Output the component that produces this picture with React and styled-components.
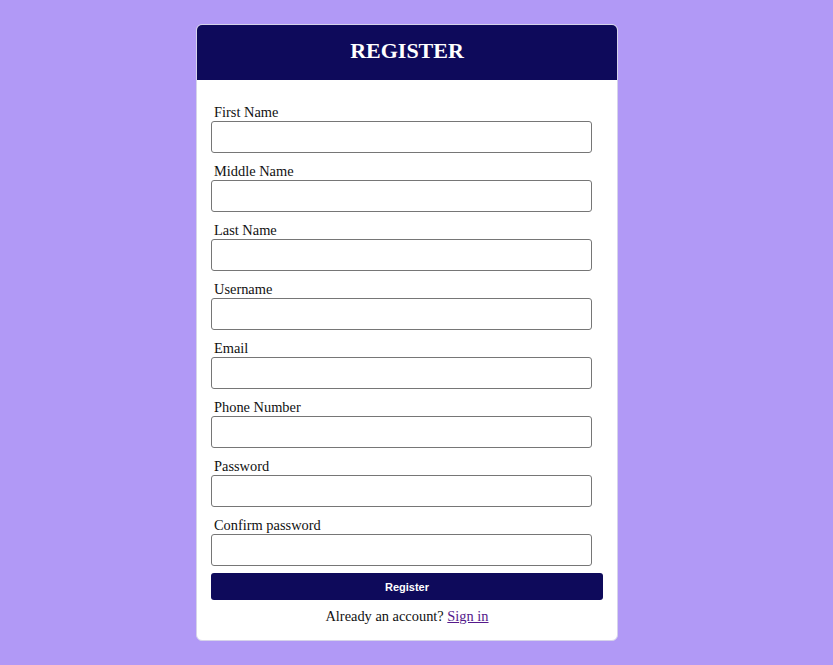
import React from 'react'
import styled, { createGlobalStyle } from 'styled-components'

const GlobalStyle = createGlobalStyle`
  html, body {
    margin: 0;
    padding: 0;
    background: #b199f6;
    font-family: "Liberation Serif", "Times New Roman", serif;
  }
`

const Page = styled.main`
  display: flex;
  justify-content: center;
  padding-top: 24px;
  padding-right: 19px;
  min-height: 665px;
  box-sizing: border-box;
`

const Card = styled.form`
  width: 422px;
  align-self: flex-start;
  background: #fff;
  border: 1px solid #d6d3ea;
  border-radius: 6px;
  overflow: hidden;
  box-sizing: border-box;
`

const Header = styled.header`
  height: 55px;
  background: #0e0a5b;
  display: flex;
  align-items: center;
  justify-content: center;
  padding-bottom: 3px;
  box-sizing: border-box;
`

const Title = styled.h1`
  margin: 0;
  color: #fff;
  font-size: 22px;
  font-weight: bold;
`

const Body = styled.div`
  padding: 23px 14px 15px 14px;
  display: flex;
  flex-direction: column;
`

const Field = styled.div`
  display: flex;
  flex-direction: column;
  margin-bottom: 9px;

  &:last-of-type {
    margin-bottom: 7px;
  }
`

const Label = styled.label`
  font-size: 14.4px;
  line-height: 18px;
  color: #111;
  margin-left: 3px;
`

const Input = styled.input`
  width: 381px;
  height: 32px;
  box-sizing: border-box;
  border: 1px solid #767676;
  border-radius: 3px;
  background: #fff;
  padding: 0 6px;
`

const Button = styled.button`
  width: 392px;
  height: 27px;
  border: none;
  border-radius: 3px;
  background: #0e0a5b;
  color: #fff;
  font-family: "Liberation Sans", Arial, sans-serif;
  font-weight: bold;
  font-size: 11px;
  cursor: pointer;
`

const Footer = styled.p`
  margin: 7px 0 0;
  text-align: center;
  font-size: 14.4px;
  line-height: 18px;
  color: #111;
`

const Link = styled.a`
  color: #551a8b;
  text-decoration: underline;
`

const fields = [
  'First Name',
  'Middle Name',
  'Last Name',
  'Username',
  'Email',
  'Phone Number',
  'Password',
  'Confirm password',
]

export default function App() {
  return (
    <Page>
      <GlobalStyle />
      <Card onSubmit={e => e.preventDefault()}>
        <Header>
          <Title>REGISTER</Title>
        </Header>
        <Body>
          {fields.map(name => (
            <Field key={name}>
              <Label>{name}</Label>
              <Input type={name.toLowerCase().includes('password') ? 'password' : 'text'} />
            </Field>
          ))}
          <Button type="submit">Register</Button>
          <Footer>
            Already an account? <Link href="#">Sign in</Link>
          </Footer>
        </Body>
      </Card>
    </Page>
  )
}
